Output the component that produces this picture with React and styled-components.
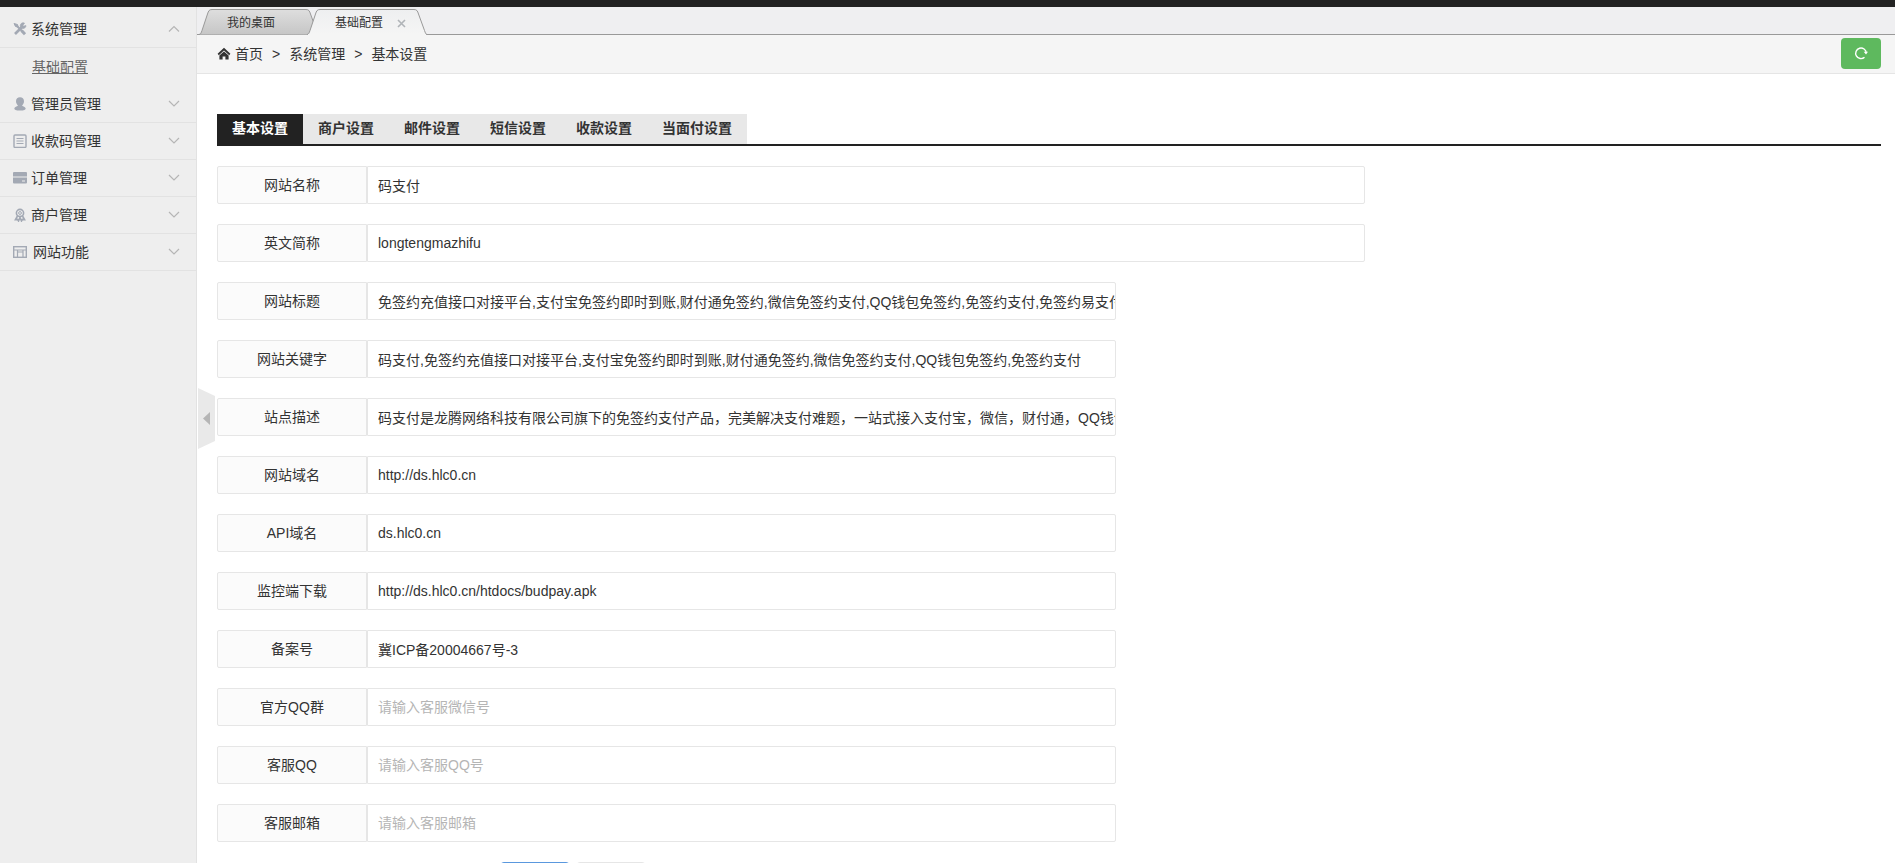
import React, { useState } from "react";
import styled, { createGlobalStyle } from "styled-components";

const GlobalStyle = createGlobalStyle`
  *, *::before, *::after { box-sizing: border-box; }
  html, body, #root { height: 100%; }
  body {
    margin: 0;
    overflow: hidden;
    color: #333;
    background: #fff;
    font: 14px/20px "Liberation Sans", "Noto Sans CJK SC", sans-serif;
  }
  ul, ol { margin: 0; padding: 0; list-style: none; }
  a { color: inherit; text-decoration: none; }
  button { font: inherit; color: inherit; cursor: pointer; }
`;

const Page = styled.div`
  display: flex;
  flex-direction: column;
  height: 100vh;
`;

const TopBar = styled.header`
  flex: none;
  height: 7px;
  background: #222;
`;

const Body = styled.div`
  display: flex;
  flex: 1;
  min-height: 0;
`;

const Sidebar = styled.nav`
  flex: none;
  width: 197px;
  padding-top: 4px;
  background: #eee;
  border-right: 1px solid #e2e2e2;
`;

const MenuHeading = styled.button`
  display: flex;
  align-items: center;
  gap: ${(p) => (p.$wide ? 6 : 4)}px;
  width: 100%;
  height: 37px;
  padding: 0 16px 0 13px;
  border: 0;
  border-bottom: 1px solid #e2e2e2;
  background: none;
  text-align: left;
`;

const MenuLabel = styled.span`
  flex: 1;
`;

const SubMenu = styled.ul`
  padding: 9px 0 9px 32px;
`;

const SubLink = styled.a`
  display: block;
  color: #666;
  text-decoration: underline;
`;

const Main = styled.main`
  position: relative;
  display: flex;
  flex: 1;
  flex-direction: column;
  min-width: 0;
`;

const TabStrip = styled.ul`
  display: flex;
  flex: none;
  height: 28px;
  padding: 2px 0 0 2px;
  background: #efeff1;
  box-shadow: inset 0 -1px 0 #999;
`;

const WindowTab = styled.li`
  display: grid;
  width: 120px;
  margin-right: -12px;

  > * { grid-area: 1 / 1; }
`;

const TabFace = styled.div`
  display: flex;
  align-items: center;
  gap: 14px;
  padding: 2px 0 0 28px;
  font-size: 12px;
  z-index: 1;
`;

const CloseButton = styled.button`
  display: flex;
  padding: 0;
  border: 0;
  background: none;
`;

const Breadcrumb = styled.nav`
  display: flex;
  flex: none;
  align-items: center;
  height: 39px;
  padding: 0 14px 0 20px;
  background: #f5f5f5;
  border-bottom: 1px solid #e5e5e5;
`;

const HomeLink = styled.a`
  display: flex;
  align-items: center;
  gap: 4px;
`;

const Separator = styled.span`
  margin: 0 9px;
`;

const RefreshButton = styled.button`
  display: flex;
  align-items: center;
  justify-content: center;
  width: 40px;
  height: 31px;
  margin: 0 0 2px auto;
  padding: 0;
  border: 0;
  border-radius: 4px;
  background: #5eb95e;
`;

const Collapse = styled.button`
  position: absolute;
  top: 381px;
  left: 1px;
  display: flex;
  padding: 0;
  border: 0;
  background: none;
`;

const Content = styled.section`
  flex: 1;
  min-height: 0;
  padding: 40px 14px 0 20px;
  overflow: hidden;
`;

const SettingTabs = styled.div`
  display: flex;
  border-bottom: 2px solid #222;
`;

const SettingTab = styled.button`
  height: 30px;
  padding: 0 15px 2px;
  border: 0;
  background: ${(p) => (p.$active ? "#222" : "#e8e8e8")};
  color: ${(p) => (p.$active ? "#fff" : "#333")};
  font-weight: 700;
`;

const Form = styled.form`
  display: flex;
  flex-direction: column;
  gap: 20px;
  padding-top: 20px;
`;

const Row = styled.div`
  display: flex;
`;

const FieldLabel = styled.label`
  flex: none;
  width: 150px;
  height: 38px;
  padding: 8px 15px;
  border: 1px solid #e6e6e6;
  border-radius: 2px 0 0 2px;
  background: #fbfbfb;
  text-align: center;
`;

const FieldInput = styled.input`
  width: ${(p) => (p.$wide ? 60 : 45)}%;
  height: 38px;
  padding: 0 0 0 10px;
  border: 1px solid #e6e6e6;
  border-radius: 0 2px 2px 0;
  background: #fff;
  color: #333;
  font: inherit;

  &::placeholder { color: #b5b5b5; }
`;

const Actions = styled.div`
  display: flex;
  gap: 6px;
  padding-left: 17%;
`;

const ActionButton = styled.button`
  width: 70px;
  height: 31px;
  border: 1px solid ${(p) => (p.$primary ? "#5a98de" : "#e6e6e6")};
  border-radius: 4px;
  background: ${(p) => (p.$primary ? "#5a98de" : "#e6e6e6")};
  color: ${(p) => (p.$primary ? "#fff" : "#333")};
`;

const TONE = "#a3a9b4";

const icons = {
  tools: (
    <g stroke={TONE} fill="none">
      <path d="M3.5 3.5 11 11" strokeWidth="2" />
      <path d="M1 1.5 4.5 2.5 5 5 2.5 4.5Z" fill={TONE} strokeWidth="1" />
      <path d="M8.5 8.5 12 12.2" strokeWidth="3" />
      <path d="M2 12 8.5 5.5" strokeWidth="2.6" />
      <path d="M11.5 1.2A2.8 2.8 0 1 0 12.9 3.6L10.8 4.2 9.8 3.2Z" fill={TONE} strokeWidth="0.8" />
    </g>
  ),
  user: (
    <path
      fill={TONE}
      d="M7 0.2C9.400 0.2 11 1.800 11 4.200 11 6.300 9.800 7.600 9.200 8.200V8.800C10 9.600 12.400 9.900 12.700 11.500 12.900 12.500 11 13.600 7 13.600 3 13.600 1.100 12.500 1.300 11.500 1.600 9.900 4 9.600 4.800 8.800V8.200C4.200 7.600 3 6.300 3 4.200 3 1.800 4.600 .2 7 .2Z"
    />
  ),
  list: (
    <g stroke={TONE} fill="none">
      <rect x="1" y="1" width="12" height="12.400" rx="1" strokeWidth="1.4" />
      <path d="M3.500 4.500H10.500M3.500 7H10.500M3.500 9.500H10.500" strokeWidth="1.2" />
    </g>
  ),
  card: (
    <g fill={TONE}>
      <path d="M1 1H13Q14 1 14 2V5.500H0V2Q0 1 1 1Z" />
      <path d="M0 6.500H14V11.500Q14 12.500 13 12.500H1Q0 12.500 0 11.500ZM9 9.500V10.500H12V9.500Z" fillRule="evenodd" />
    </g>
  ),
  medal: (
    <g stroke={TONE} fill="none">
      <circle cx="7" cy="5" r="3.600" strokeWidth="1.6" />
      <circle cx="7" cy="5" r="1.400" />
      <path d="M4.500 8 2.500 11.600 4.500 11.400 5.500 13 7 9.500 8.500 13 9.500 11.400 11.500 11.600 9.500 8" strokeWidth="1.6" />
    </g>
  ),
  site: (
    <g stroke={TONE} fill="none">
      <rect x="0.7" y="1.7" width="12.600" height="10.600" strokeWidth="1.4" />
      <path d="M1 5H13M4.500 5V12M10 5V12M4.500 7H10" strokeWidth="1.2" />
    </g>
  ),
};

function MenuIcon({ name }) {
  return (
    <svg width="14" height="14" viewBox="0 0 14 14" aria-hidden="true">
      {icons[name]}
    </svg>
  );
}

function Chevron({ up }) {
  return (
    <svg width="12" height="8" viewBox="0 0 12 8" fill="none" stroke="#b5b5b5" aria-hidden="true">
      <path d={up ? "M1 6.5 6 1.5 11 6.5" : "M1 1 6 6 11 1"} strokeWidth="1.2" />
    </svg>
  );
}

function TabShape({ active }) {
  return (
    <svg width="120" height="26" viewBox="0 0 120 26" aria-hidden="true">
      <defs>
        <linearGradient id={active ? "tabOn" : "tabOff"} x1="0" y1="0" x2="0" y2="1">
          <stop offset="0" stopColor={active ? "#eeeff0" : "#dedede"} />
          <stop offset="1" stopColor={active ? "#f5f5f5" : "#c6c6c6"} />
        </linearGradient>
      </defs>
      <path
        d="M0 25.5C2 25 2 24 3 21.500L8.500 5C9.500 2 10 .5 13 .5H107C110 .5 110.500 2 111.500 5L117.500 21.500C118.500 24 118.500 25 120 25.500"
        fill={active ? "url(#tabOn)" : "url(#tabOff)"}
        stroke="#999"
      />
      {active && <path d="M1 25.500H119" stroke="#f5f5f5" />}
    </svg>
  );
}

const menu = [
  { label: "系统管理", icon: "tools", children: ["基础配置"] },
  { label: "管理员管理", icon: "user" },
  { label: "收款码管理", icon: "list" },
  { label: "订单管理", icon: "card" },
  { label: "商户管理", icon: "medal" },
  { label: "网站功能", icon: "site" },
];

const settingTabs = ["基本设置", "商户设置", "邮件设置", "短信设置", "收款设置", "当面付设置"];

const fields = [
  { id: "name", label: "网站名称", value: "码支付", wide: true },
  { id: "short", label: "英文简称", value: "longtengmazhifu", wide: true },
  {
    id: "title",
    label: "网站标题",
    value: "免签约充值接口对接平台,支付宝免签约即时到账,财付通免签约,微信免签约支付,QQ钱包免签约,免签约支付,免签约易支付",
  },
  {
    id: "keywords",
    label: "网站关键字",
    value: "码支付,免签约充值接口对接平台,支付宝免签约即时到账,财付通免签约,微信免签约支付,QQ钱包免签约,免签约支付",
  },
  {
    id: "description",
    label: "站点描述",
    value: "码支付是龙腾网络科技有限公司旗下的免签约支付产品，完美解决支付难题，一站式接入支付宝，微信，财付通，QQ钱包",
  },
  { id: "domain", label: "网站域名", value: "http://ds.hlc0.cn" },
  { id: "api", label: "API域名", value: "ds.hlc0.cn" },
  { id: "download", label: "监控端下载", value: "http://ds.hlc0.cn/htdocs/budpay.apk" },
  { id: "icp", label: "备案号", value: "冀ICP备20004667号-3" },
  { id: "group", label: "官方QQ群", placeholder: "请输入客服微信号" },
  { id: "qq", label: "客服QQ", placeholder: "请输入客服QQ号" },
  { id: "mail", label: "客服邮箱", placeholder: "请输入客服邮箱" },
];

export default function App() {
  const [current, setCurrent] = useState(0);

  return (
    <Page>
      <GlobalStyle />
      <TopBar />
      <Body>
        <Sidebar>
          {menu.map((item) => (
            <div key={item.label}>
              <MenuHeading type="button" $wide={item.icon === "site"}>
                <MenuIcon name={item.icon} />
                <MenuLabel>{item.label}</MenuLabel>
                <Chevron up={Boolean(item.children)} />
              </MenuHeading>
              {item.children && (
                <SubMenu>
                  {item.children.map((child) => (
                    <li key={child}>
                      <SubLink href="#base">{child}</SubLink>
                    </li>
                  ))}
                </SubMenu>
              )}
            </div>
          ))}
        </Sidebar>
        <Main>
          <TabStrip>
            <WindowTab>
              <TabShape />
              <TabFace>我的桌面</TabFace>
            </WindowTab>
            <WindowTab>
              <TabShape active />
              <TabFace>
                基础配置
                <CloseButton type="button" aria-label="关闭">
                  <svg width="9" height="9" viewBox="0 0 9 9" stroke="#b0b4b8" strokeWidth="1.6">
                    <path d="M1 1 8 8M8 1 1 8" />
                  </svg>
                </CloseButton>
              </TabFace>
            </WindowTab>
          </TabStrip>
          <Breadcrumb>
            <HomeLink href="#home">
              <svg width="14" height="14" viewBox="0 0 14 14" fill="#333" aria-hidden="true">
                <path d="M7 .8 13.400 6.800 12.200 8.200 7 3.400 1.800 8.200 .6 6.800Z" />
                <path d="M7 4.400 11.600 8.600V12.600H8.400V9.600H5.600V12.600H2.400V8.600Z" />
              </svg>
              首页
            </HomeLink>
            <Separator>&gt;</Separator>
            <span>系统管理</span>
            <Separator>&gt;</Separator>
            <span>基本设置</span>
            <RefreshButton type="button" aria-label="刷新">
              <svg width="14" height="14" viewBox="0 0 14 14" fill="none" stroke="#fff" aria-hidden="true">
                <path d="M10.500 11.300A5.300 5.300 0 1 1 12.300 7" strokeWidth="1.400" />
                <path d="M9.700 5.800H14L12 8.500Z" fill="#fff" stroke="none" />
              </svg>
            </RefreshButton>
          </Breadcrumb>
          <Content>
            <SettingTabs role="tablist">
              {settingTabs.map((tab, i) => (
                <SettingTab
                  key={tab}
                  type="button"
                  role="tab"
                  aria-selected={i === current}
                  $active={i === current}
                  onClick={() => setCurrent(i)}
                >
                  {tab}
                </SettingTab>
              ))}
            </SettingTabs>
            <Form>
              {fields.map((f) => (
                <Row key={f.id}>
                  <FieldLabel htmlFor={f.id}>{f.label}</FieldLabel>
                  <FieldInput
                    id={f.id}
                    type="text"
                    $wide={f.wide}
                    defaultValue={f.value}
                    placeholder={f.placeholder}
                  />
                </Row>
              ))}
              <Actions>
                <ActionButton type="submit" $primary>保存</ActionButton>
                <ActionButton type="reset">取消</ActionButton>
              </Actions>
            </Form>
          </Content>
          <Collapse type="button" aria-label="收起菜单">
            <svg width="17" height="61" viewBox="0 0 17 61" aria-hidden="true">
              <path d="M0 0 17 8V53L0 61Z" fill="#e9e9e9" />
              <path d="M12 24V37L5 30.500Z" fill="#b5b5b5" />
            </svg>
          </Collapse>
        </Main>
      </Body>
    </Page>
  );
}
